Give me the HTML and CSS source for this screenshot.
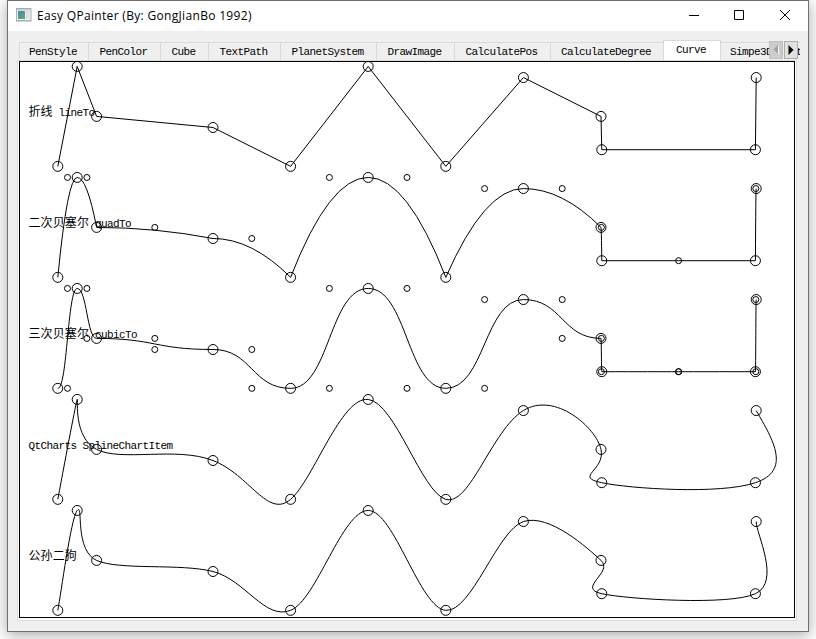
FILE: index.html
```html
<!DOCTYPE html>
<html lang="zh-CN">
<head>
<meta charset="utf-8">
<title>Easy QPainter</title>
<link rel="stylesheet" href="styles.css">
</head>
<body>
<div class="window">
  <header class="titlebar">
    <svg class="app-icon" width="16" height="14" viewBox="0 0 16 14">
      <defs><linearGradient id="pane" x1="0" y1="0" x2="0.6" y2="1"><stop offset="0" stop-color="#4a84b4"/><stop offset="1" stop-color="#58a878"/></linearGradient></defs>
      <rect x="0.5" y="0.5" width="14.5" height="12.5" fill="#f5f5f5" stroke="#a3adb6"/>
      <rect x="1" y="1" width="13.5" height="1.5" fill="#c3cbd2"/>
      <rect x="2" y="3" width="7" height="8" fill="url(#pane)"/>
      <rect x="10" y="3" width="1.5" height="8" fill="#d0d6da"/>
      <rect x="12.5" y="3" width="1" height="8" fill="#d0d6da"/>
      <path d="M1 12.5h14" stroke="#a3adb6"/>
    </svg>
    <h1 class="title">Easy QPainter (By: GongJianBo 1992)</h1>
    <svg class="controls" width="110" height="12" viewBox="0 0 110 12">
      <path d="M1 6.5h10M46.500 1.500h9v9h-9z" fill="none" stroke="#000"/>
      <path d="M92 1l10 10M102 1l-10 10" fill="none" stroke="#000"/>
    </svg>
  </header>
  <main class="client">
    <nav class="tabs">
      <span class="tab t-first">PenStyle</span>
      <span class="tab t-color">PenColor</span>
      <span class="tab t-cube">Cube</span>
      <span class="tab t-path">TextPath</span>
      <span class="tab t-planet">PlanetSystem</span>
      <span class="tab t-image">DrawImage</span>
      <span class="tab t-pos">CalculatePos</span>
      <span class="tab t-degree">CalculateDegree</span>
      <span class="tab active">Curve</span>
      <span class="tab t-last">Simpe3DPainter</span>
      <div class="scroller">
        <span class="arrow disabled"><svg width="6" height="10" viewBox="0 0 6 10"><path d="M6 1v9L1.500 5.500z" fill="#fff"/><path d="M5 0v9L.5 4.500z" fill="#a0a0a0"/></svg></span>
        <span class="arrow"><svg width="6" height="10" viewBox="0 0 6 10"><path d="M.5 0v10L5.500 5z"/></svg></span>
      </div>
    </nav>
    <section class="pane">
      <svg id="canvas" class="canvas" width="774" height="555" viewBox="20 62 774 555">
        <g id="curves" class="curves"></g>
        <g class="labels">
          <text y="116"><tspan class="han" x="28.500">折线</tspan><tspan x="58.500">lineTo</tspan></text>
          <text y="227"><tspan class="han" x="28.500">二次贝塞尔</tspan><tspan x="95">quadTo</tspan></text>
          <text y="338"><tspan class="han" x="28.500">三次贝塞尔</tspan><tspan x="95">cubicTo</tspan></text>
          <text y="449"><tspan x="28.500">QtCharts SplineChartItem</tspan></text>
          <text y="560"><tspan class="han" x="28.500">公孙二狗</tspan></text>
        </g>
      </svg>
    </section>
  </main>
</div>
<script src="curves.js"></script>
</body>
</html>
```
FILE: styles.css
```css
* { box-sizing: border-box; }
html, body { margin: 0; height: 100%; overflow: hidden; }
body { background: #fff; padding: 0 7px; font-family: "Liberation Mono", "Noto Sans CJK SC", monospace; }
.window { width: 802px; height: 632px; border: 1px solid #707070; background: #f0f0f0; box-shadow: 0 3px 14px rgba(0, 0, 0, .35); }
.titlebar { height: 30px; background: #fff; display: flex; align-items: center; padding-left: 8px; }
.app-icon { margin-top: -2px; }
.title { margin: 0; padding-left: 5px; font: 12px/16px "Open Sans", sans-serif; letter-spacing: .32px; color: #000; white-space: nowrap; flex: 1; }
.controls { margin-right: 10px; margin-top: -2px; }
.client { padding: 9px 7px 11px 9px; height: 600px; }
.tabs { position: relative; display: flex; align-items: flex-end; height: 20px; width: 783px; padding-left: 2px; overflow: hidden; font-size: 11px; }
.tab { height: 18px; border: 1px solid #d9d9d9; border-left: 0; border-bottom: 0; padding-right: 2px; text-align: center; line-height: 18px; letter-spacing: -.6px; white-space: nowrap; flex: none; color: #000; }
.t-first { width: 70px; border-left: 1px solid #d9d9d9; }
.t-color { width: 72px; }
.t-cube { width: 48px; }
.t-path { width: 72px; }
.t-planet { width: 96px; }
.t-image { width: 78px; }
.t-pos { width: 96px; }
.t-degree { width: 112px; border-right: 0; }
.active { width: 58px; height: 20px; background: #fff; border-left: 1px solid #d9d9d9; line-height: 19px; }
.t-last { width: 100px; text-align: left; padding-left: 9px; }
.scroller { position: absolute; right: 2px; top: 1px; display: flex; gap: 1px; background: #f0f0f0; }
.arrow { width: 14px; height: 18px; border: 1px solid #adadad; background: #e1e1e1; display: flex; align-items: center; justify-content: center; }
.arrow.disabled { background: #ccc; border-color: #bfbfbf; }
.pane { width: 780px; height: 561px; border: 1px solid #dcdcdc; background: #fff; padding: 0 1px; }
.canvas { display: block; box-sizing: content-box; border: 1px solid #000; background: #fff; }
.curves { fill: none; stroke: #000; stroke-width: 1; }
.labels { font-size: 11px; letter-spacing: -.6px; }
.han { font: 12px "Noto Sans CJK SC", sans-serif; letter-spacing: .1px; }
```
FILE: curves.js
```javascript
const GRID = [[1, .95], [1.5, .05], [2, .5], [5, .6], [7, .95], [9, .05], [11, .95], [13, .15], [15, .5], [15.02, .8], [18.98, .8], [19, .15]];
const ROW = 111;
const out = [];
const row = r => GRID.map(([x, y]) => [19 + x * 38.8, 60.9 + (r + y) * ROW]);
const circle = (p, radius) => out.push(`<circle cx="${p[0]}" cy="${p[1]}" r="${radius}"/>`);
const trace = (pts, segment) => {
  let d = `M${pts[0]}`;
  for (let i = 1; i < pts.length; i++) d += segment(pts[i - 1], pts[i], i - 1);
  out.push(`<path d="${d}"/>`);
  pts.forEach(p => circle(p, 5));
};

trace(row(0), (a, b) => `L${b}`);

trace(row(1), (a, b) => {
  const c = [(a[0] + b[0]) / 2, Math.min(a[1], b[1])];
  circle(c, 3);
  return `Q${c} ${b}`;
});

trace(row(2), (a, b) => {
  const mid = (a[0] + b[0]) / 2;
  circle([mid, a[1]], 3);
  circle([mid, b[1]], 3);
  return `C${mid},${a[1]} ${mid},${b[1]} ${b}`;
});

// Natural spline: solve the tridiagonal system for the first control points.
function firstControls(v) {
  const n = v.length - 1, rhs = [], x = [], tmp = [];
  for (let i = 1; i < n - 1; i++) rhs[i] = 4 * v[i] + 2 * v[i + 1];
  rhs[0] = v[0] + 2 * v[1];
  rhs[n - 1] = (8 * v[n - 1] + v[n]) / 2;
  let b = 2;
  x[0] = rhs[0] / b;
  for (let i = 1; i < n; i++) {
    tmp[i] = 1 / b;
    b = (i < n - 1 ? 4 : 3.5) - tmp[i];
    x[i] = (rhs[i] - x[i - 1]) / b;
  }
  for (let i = 1; i < n; i++) x[n - i - 1] -= tmp[n - i] * x[n - i];
  return x;
}
const spline = row(3);
const cx = firstControls(spline.map(p => p[0]));
const cy = firstControls(spline.map(p => p[1]));
trace(spline, (a, b, i) => {
  const last = i === cx.length - 1;
  const c2 = last ? [(b[0] + cx[i]) / 2, (b[1] + cy[i]) / 2] : [2 * b[0] - cx[i + 1], 2 * b[1] - cy[i + 1]];
  return `C${cx[i]},${cy[i]} ${c2} ${b}`;
});

// Cardinal spline with tension 0.5, end points repeated.
const card = row(4);
const tangent = i => [0, 1].map(k => (card[Math.min(i + 1, card.length - 1)][k] - card[Math.max(i - 1, 0)][k]) / 2);
trace(card, (a, b, i) => {
  const s = tangent(i), e = tangent(i + 1);
  return `C${a[0] + s[0] / 3},${a[1] + s[1] / 3} ${b[0] - e[0] / 3},${b[1] - e[1] / 3} ${b}`;
});

document.getElementById('curves').innerHTML = out.join('');
```
